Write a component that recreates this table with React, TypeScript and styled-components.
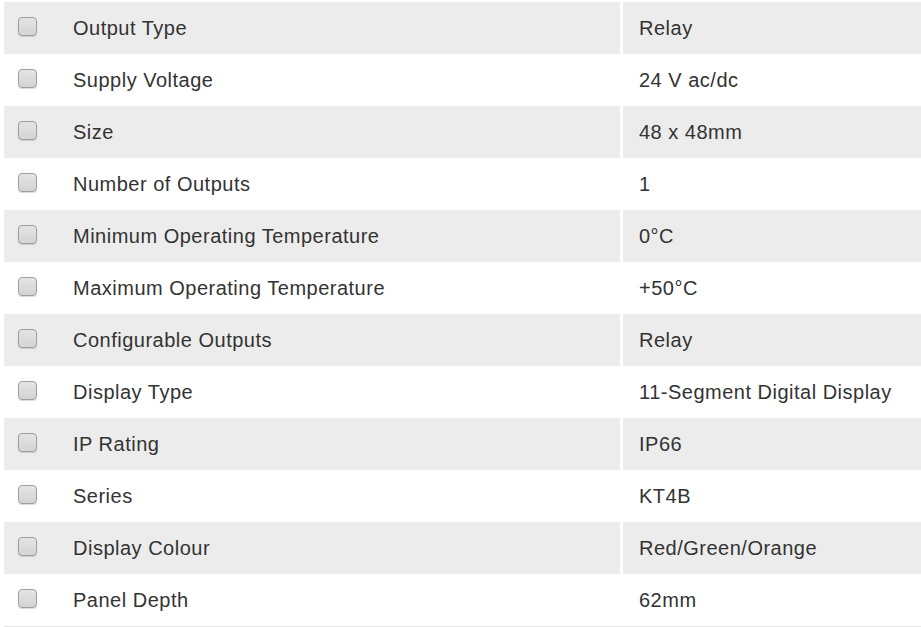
import styled, { createGlobalStyle } from "styled-components";

type Spec = {
  label: string;
  value: string;
};

const specs: Spec[] = [
  { label: "Output Type", value: "Relay" },
  { label: "Supply Voltage", value: "24 V ac/dc" },
  { label: "Size", value: "48 x 48mm" },
  { label: "Number of Outputs", value: "1" },
  { label: "Minimum Operating Temperature", value: "0°C" },
  { label: "Maximum Operating Temperature", value: "+50°C" },
  { label: "Configurable Outputs", value: "Relay" },
  { label: "Display Type", value: "11-Segment Digital Display" },
  { label: "IP Rating", value: "IP66" },
  { label: "Series", value: "KT4B" },
  { label: "Display Colour", value: "Red/Green/Orange" },
  { label: "Panel Depth", value: "62mm" },
];

const GlobalStyle = createGlobalStyle`
  body {
    margin: 0;
    background: #fff;
    font-family: "Liberation Sans", Arial, sans-serif;
  }
`;

export default function App() {
  return (
    <>
      <GlobalStyle />
      <Wrap>
        <Table>
          {specs.map((s, i) => (
            <Row key={i} $shaded={i % 2 === 0}>
              <LabelCell>
                <Check type="checkbox" />
                <Label>{s.label}</Label>
              </LabelCell>
              <ValueCell>{s.value}</ValueCell>
            </Row>
          ))}
        </Table>
      </Wrap>
    </>
  );
}

const Wrap = styled.div`
  padding: 2px 0 0 4px;
`;

const Table = styled.div`
  display: flex;
  flex-direction: column;
  border-bottom: 1px solid #e6e6e6;
`;

const Row = styled.div<{ $shaded: boolean }>`
  display: grid;
  grid-template-columns: 616px 1fr;
  height: 52px;
  background: ${(p) => (p.$shaded ? "#ececec" : "#fff")};
  color: #333;
  font-size: 20px;
  letter-spacing: 0.5px;
`;

const LabelCell = styled.div`
  display: flex;
  align-items: center;
  padding-left: 14px;
`;

const Check = styled.input`
  appearance: none;
  width: 19px;
  height: 19px;
  margin: -3px 36px 0 0;
  border: 1px solid #9e9e9e;
  border-radius: 4px;
  background: linear-gradient(#e4e4e4, #d4d4d4);
  box-shadow: 0 1px 1px rgba(0, 0, 0, 0.15);
`;

const Label = styled.span``;

const ValueCell = styled.div`
  display: flex;
  align-items: center;
  padding-left: 16px;
  border-left: 3px solid #fff;
`;
